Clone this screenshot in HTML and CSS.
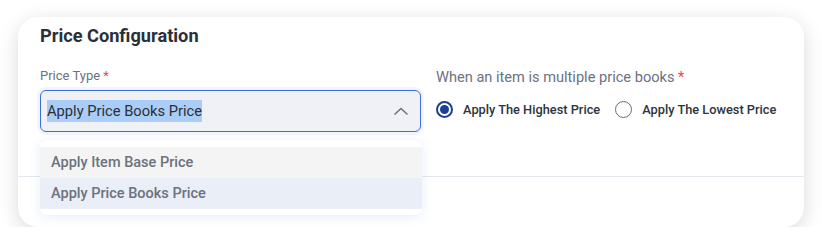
FILE: index.html
```html
<!DOCTYPE html>
<html lang="en">
<head>
    <meta charset="UTF-8">
    <title>Price Configuration</title>
    <link rel="stylesheet" href="styles.css">
</head>
<body>
    <div class="card">
        <h2 class="card-title">Price Configuration</h2>

        <div class="fields">
            <div class="field">
                <label class="field-label">Price Type <span class="req">*</span></label>
                <div class="select">
                    <div class="select-box">
                        <span class="select-value">Apply Price Books Price</span>
                        <svg class="chevron" width="14" height="8" viewBox="0 0 14 8">
                            <path d="M1 7 L7 1.5 L13 7" fill="none" stroke="#6b7280" stroke-width="1.6" stroke-linecap="round" stroke-linejoin="round"/>
                        </svg>
                    </div>
                    <ul class="menu">
                        <li class="menu-item hover">Apply Item Base Price</li>
                        <li class="menu-item active">Apply Price Books Price</li>
                    </ul>
                </div>
            </div>

            <div class="field">
                <label class="field-label big">When an item is multiple price books <span class="req">*</span></label>
                <div class="radios">
                    <label class="radio">
                        <span class="dot checked"></span>
                        Apply The Highest Price
                    </label>
                    <label class="radio">
                        <span class="dot"></span>
                        Apply The Lowest Price
                    </label>
                </div>
            </div>
        </div>

        <div class="divider"></div>
    </div>
</body>
</html>
```

FILE: styles.css
```css
body {
    margin: 0;
    background: #ffffff;
    font-family: 'Roboto', 'Liberation Sans', sans-serif;
}

.card {
    position: relative;
    margin: 17px 0 0 18px;
    width: 786px;
    height: 210px;
    box-sizing: border-box;
    background: #fff;
    border-radius: 20px;
    box-shadow: 0 5px 20px rgba(0, 0, 0, 0.15);
    padding: 7px 0 0 22px;
}

.card-title {
    margin: 0;
    font-size: 18.2px;
    line-height: 24px;
    font-weight: 700;
    color: #2b2f38;
}

.fields {
    display: grid;
    grid-template-columns: 381px auto;
    column-gap: 15px;
    margin-top: 20px;
}

.field-label {
    display: block;
    font-size: 13px;
    line-height: 16px;
    color: #6b7280;
    margin-bottom: 6px;
}

.field-label.big {
    font-size: 14.6px;
    line-height: 18px;
    margin-bottom: 2px;
}

.req {
    color: #ef4444;
}

.select {
    position: relative;
}

.select-box {
    height: 42px;
    box-sizing: border-box;
    border: 1px solid #3a6fd6;
    border-radius: 6px;
    background: #eff1f6;
    box-shadow: 0 0 0 3px rgba(58, 111, 214, 0.07);
    display: flex;
    align-items: center;
    justify-content: space-between;
    padding: 0 12px 0 6px;
}

.select-value {
    display: inline-block;
    background: #a9cdf7;
    font-size: 14.7px;
    line-height: 22px;
    color: #2b2f38;
}

.menu {
    position: absolute;
    top: 50px;
    left: 0;
    width: 382px;
    margin: 0;
    padding: 7px 0 6px;
    list-style: none;
    background: #fff;
    border-radius: 7px;
    box-shadow: 0 2px 12px rgba(58, 111, 214, 0.12);
    z-index: 2;
}

.menu-item {
    height: 31px;
    line-height: 31px;
    padding-left: 11px;
    font-size: 14.5px;
    font-weight: 500;
    color: #6b7280;
}

.menu-item.hover {
    background: #f4f4f4;
}

.menu-item.active {
    background: #eaeef6;
}

.radios {
    height: 42px;
    display: flex;
    align-items: center;
    gap: 15px;
}

.radio {
    display: flex;
    align-items: center;
    gap: 10px;
    font-size: 12.8px;
    font-weight: 500;
    color: #2d3440;
}

.dot {
    width: 17px;
    height: 17px;
    box-sizing: border-box;
    border: 1.5px solid #6b6b6b;
    border-radius: 50%;
    display: inline-flex;
    align-items: center;
    justify-content: center;
}

.dot.checked {
    border: 2px solid #1e3f8f;
}

.dot.checked::after {
    content: "";
    width: 9px;
    height: 9px;
    border-radius: 50%;
    background: #1e3f8f;
}

.divider {
    position: absolute;
    left: 0;
    right: 0;
    top: 159px;
    height: 1px;
    background: #e3e8ef;
}
```
